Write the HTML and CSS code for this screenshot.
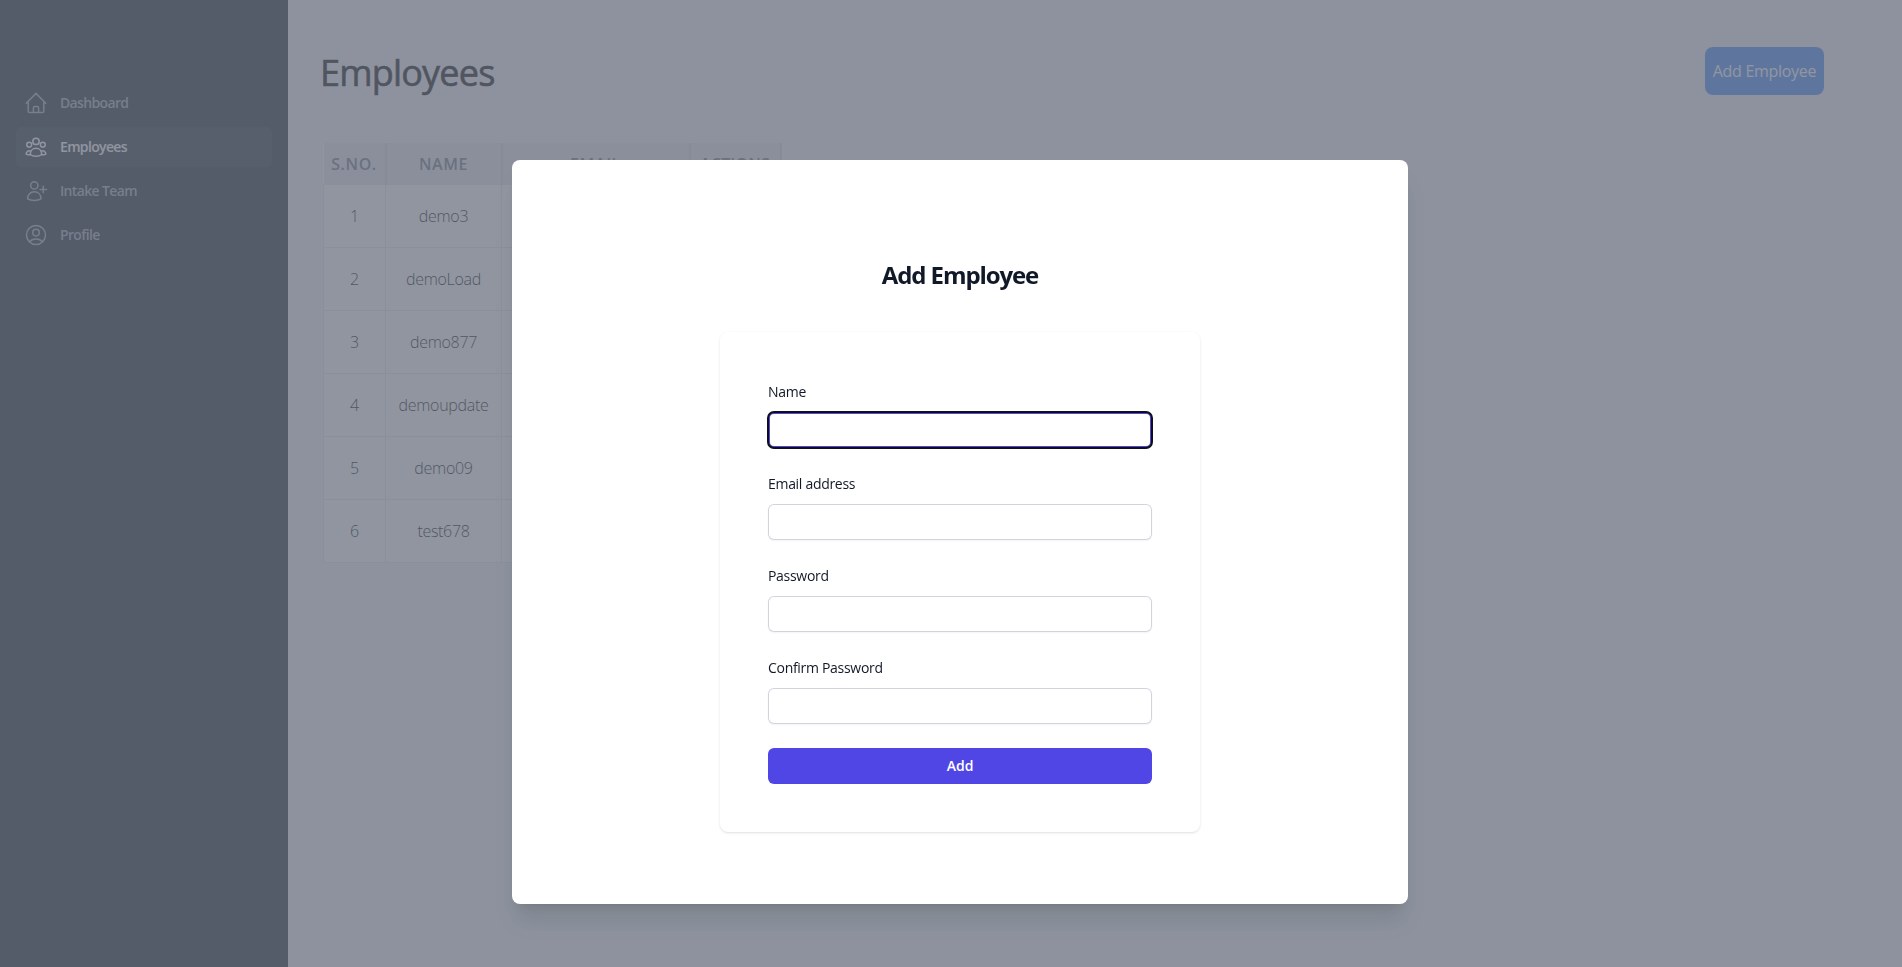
FILE: index.html
```html
<!DOCTYPE html>
<html lang="en">
<head>
<meta charset="utf-8">
<title>Employees</title>
<link rel="stylesheet" href="styles.css">
</head>
<body>
<div class="app">
  <aside class="sidebar">
    <nav class="nav">
      <a class="nav-item"><svg class="icon" viewBox="0 0 24 24"><path d="M2.300 12.200 12 2.400l9.700 9.800M4.200 10.400V20.300a1.200 1.200 0 0 0 1.200 1.200h13.200a1.200 1.200 0 0 0 1.200-1.200V10.400M9.400 21.400V16.800a1.300 1.300 0 0 1 1.300-1.300h2.600a1.300 1.300 0 0 1 1.300 1.300v4.600"/></svg><span>Dashboard</span></a>
      <a class="nav-item active"><svg class="icon" viewBox="0 0 24 24"><circle cx="12" cy="6.400" r="3.200"/><circle cx="5.200" cy="9.700" r="2.400"/><circle cx="18.800" cy="9.700" r="2.400"/><path d="M6.300 19.500c0-3.600 2.400-6.200 5.700-6.200s5.700 2.600 5.700 6.200c-1.500 1.200-3.500 1.800-5.700 1.800s-4.200-.600-5.700-1.800ZM7 16.200c-2.600-1-5 .500-4.800 3 1.200.700 2.600.800 4.100.300M17 16.200c2.600-1 5 .500 4.800 3-1.200.700-2.600.800-4.100.300"/></svg><span>Employees</span></a>
      <a class="nav-item"><svg class="icon" viewBox="0 0 24 24"><circle cx="10.300" cy="6.400" r="3.600"/><path d="M3.600 19.800c0-4.200 2.800-7 6.700-7s6.700 2.800 6.700 7c-1.800 1.100-4.200 1.600-6.700 1.600s-4.900-.500-6.700-1.600ZM16 10.400h6.500M19.200 7.200v6.500"/></svg><span>Intake Team</span></a>
      <a class="nav-item"><svg class="icon" viewBox="0 0 24 24"><circle cx="12" cy="12" r="9.500"/><circle cx="12" cy="9.600" r="3.300"/><path d="M5.500 18.800c1.500-1.900 3.800-2.800 6.500-2.800s5 .900 6.500 2.800"/></svg><span>Profile</span></a>
    </nav>
  </aside>
  <main class="main">
    <header class="page-head">
      <h1 class="title">Employees</h1>
      <button class="add-employee">Add Employee</button>
    </header>
    <table class="table">
      <colgroup><col class="c1"><col class="c2"><col class="c3"><col class="c4"></colgroup>
      <thead><tr><th>S.NO.</th><th>NAME</th><th>EMAIL</th><th class="tight">ACTIONS</th></tr></thead>
      <tbody>
        <tr><td>1</td><td>demo3</td><td></td><td></td></tr>
        <tr><td>2</td><td>demoLoad</td><td></td><td></td></tr>
        <tr><td>3</td><td>demo877</td><td></td><td></td></tr>
        <tr><td>4</td><td>demoupdate</td><td></td><td></td></tr>
        <tr><td>5</td><td>demo09</td><td></td><td></td></tr>
        <tr><td>6</td><td>test678</td><td></td><td></td></tr>
      </tbody>
    </table>
  </main>
</div>
<div class="overlay">
  <section class="modal">
    <h2 class="modal-title">Add Employee</h2>
    <form class="card">
      <label class="field"><span>Name</span><input class="input focused" type="text"></label>
      <label class="field"><span>Email address</span><input class="input" type="email"></label>
      <label class="field"><span>Password</span><input class="input" type="password"></label>
      <label class="field"><span>Confirm Password</span><input class="input" type="password"></label>
      <button class="submit" type="button">Add</button>
    </form>
  </section>
</div>
</body>
</html>
```
FILE: styles.css
```css
* { box-sizing: border-box; margin: 0; padding: 0; }
body { font-family: "Open Sans", "Noto Sans", sans-serif; font-size: 16px; line-height: 24px; color: #000; overflow: hidden; }
button, input { font: inherit; border: 0; }
.app { display: flex; height: 967px; background: #f3f4f6; }
.sidebar { width: 288px; background: #111827; padding: 83px 16px 0; }
.nav { display: flex; flex-direction: column; gap: 4px; }
.nav-item { display: flex; align-items: center; gap: 12px; height: 40px; padding: 8px; border-radius: 6px; color: #9ca3af; font-size: 14px; font-weight: 600; letter-spacing: -.65px; }
.nav-item.active { background: #1f2937; color: #fff; }
.icon { width: 24px; height: 24px; fill: none; stroke: currentColor; stroke-width: 1.5; stroke-linecap: round; stroke-linejoin: round; }
.main { flex: 1; padding: 47px 78px 0 32px; }
.page-head { display: flex; justify-content: space-between; align-items: flex-start; height: 96px; }
.title { font-size: 36px; line-height: 52px; font-weight: 500; letter-spacing: -.8px; -webkit-text-stroke: .6px #000; }
.add-employee { width: 119px; height: 48px; border-radius: 8px; background: #3b82f6; color: #fff; letter-spacing: -.3px; }
.table { margin-left: 3px; width: 457px; table-layout: fixed; border-collapse: collapse; background: #fff; text-align: center; }
.c1 { width: 62px; }
.c2 { width: 116px; }
.c3 { width: 188px; }
.c4 { width: 91px; }
.table th { height: 41px; padding-top: 1px; background: #e5e7eb; color: #6b7280; font-weight: 600; letter-spacing: .6px; border-right: 2px solid #d1d5db; }
.table th.tight { letter-spacing: .2px; }
.table td { height: 63px; border: 1px solid #e5e7eb; font-weight: 350; letter-spacing: -.3px; }
.overlay { position: fixed; inset: 0; display: flex; justify-content: center; align-items: flex-start; padding: 160px 0 0 18px; background: rgba(107, 114, 128, .75); }
.modal { width: 896px; height: 744px; padding: 99px 208px 0; border-radius: 8px; background: #fff; box-shadow: 0 20px 25px -5px rgba(0, 0, 0, .1), 0 8px 10px -6px rgba(0, 0, 0, .1); }
.modal-title { height: 73px; font-size: 24px; line-height: 32px; font-weight: 700; letter-spacing: -1.1px; text-align: center; color: #111827; }
.card { display: flex; flex-direction: column; gap: 24px; height: 500px; padding: 48px; border-radius: 8px; box-shadow: 0 1px 3px rgba(0, 0, 0, .1), 0 1px 2px -1px rgba(0, 0, 0, .1); }
.field { display: flex; flex-direction: column; align-items: flex-start; gap: 8px; font-size: 14px; font-weight: 500; letter-spacing: -.3px; color: #111827; }
.input { width: 384px; height: 36px; border-radius: 6px; background: #fff; outline: 0; box-shadow: inset 0 0 0 1px #d1d5db, 0 1px 2px rgba(0, 0, 0, .05); }
.input.focused { box-shadow: inset 0 0 0 2px #4f46e5; outline: 2px solid #101010; outline-offset: -1px; }
.submit { height: 36px; border-radius: 6px; background: #4f46e5; color: #fff; font-size: 14px; font-weight: 600; }
```
